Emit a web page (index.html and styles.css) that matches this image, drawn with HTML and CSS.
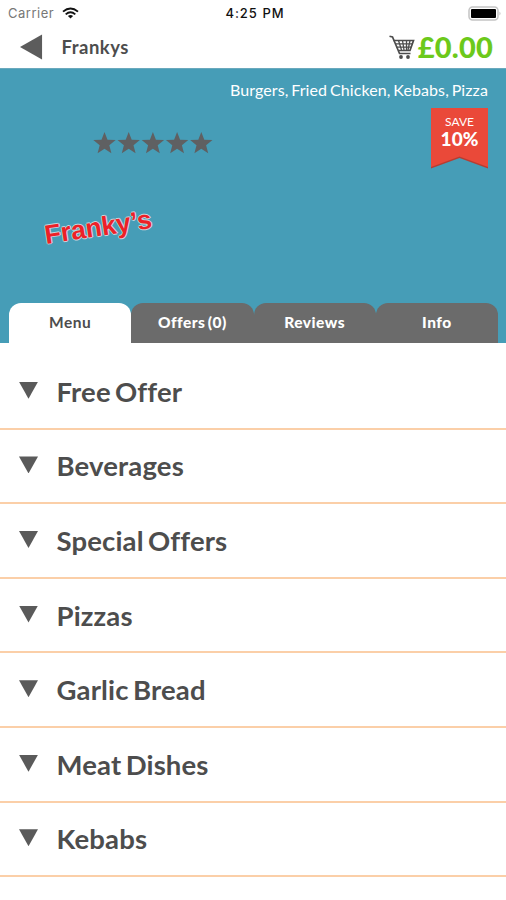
FILE: index.html
```html
<!DOCTYPE html>
<html lang="en">
<head>
<meta charset="utf-8">
<title>Frankys</title>
<link rel="stylesheet" href="styles.css">
</head>
<body>
<div class="status">
  <div class="carrier"><span>Carrier</span>
    <svg class="wifi" viewBox="0 0 17 12"><g fill="none" stroke="#111" stroke-width="1.9"><path d="M1 4.6Q8.500-1.800 16 4.600"/><path d="M3.700 7.400Q8.500 3.200 13.300 7.400"/></g><path d="M8.500 11.500L5.900 9Q8.500 6.900 11.100 9Z" fill="#111"/></svg>
  </div>
  <div class="clock">4:25 PM</div>
  <svg class="battery" viewBox="0 0 34 15"><rect x="1" y="1" width="29" height="13" rx="3.500" fill="#fff" stroke="#c4c4c4" stroke-width="1.500"/><rect x="3" y="3" width="25" height="9" rx="1" fill="#000"/><path d="M31.500 5.500q2 2 0 4z" fill="#bbb"/></svg>
</div>
<header class="bar">
  <svg class="back" viewBox="0 0 24 26"><path d="M0 13L23 0V26Z" fill="#5c5c5c"/></svg>
  <h1 class="title">Frankys</h1>
  <div class="basket">
    <svg class="cart" viewBox="0 0 26 24"><g fill="none" stroke="#4c4c4c" stroke-width="1.700"><path d="M0.500 1.200L3.500 2L10.500 18.500H21.500"/><path d="M4.500 5.500H24.500L21 15.500H9.500"/><path d="M6 8.800H23.500M7.500 12.100H22M9.500 5.500L12.500 15M13.500 5.500L15 15M17.500 5.500V15M21 5.500L19 15" stroke-width="1.300"/></g><circle cx="12" cy="22" r="1.900" fill="#4c4c4c"/><circle cx="19" cy="22" r="1.900" fill="#4c4c4c"/></svg>
    <span class="total">£0.00</span>
  </div>
</header>
<section class="hero">
  <p class="cuisines">Burgers, Fried Chicken, Kebabs, Pizza</p>
  <div class="summary">
    <div class="brand">
      <svg class="stars" viewBox="0 0 120 22"><defs><path id="star" d="M11.500 0L14.500 7.700L22.700 8.100L16.300 13.200L18.400 21.200L11.500 16.700L4.600 21.200L6.700 13.200L0.300 8.100L8.500 7.700Z"/></defs><g fill="#5f6062"><use href="#star"/><use href="#star" x="24.200"/><use href="#star" x="48.400"/><use href="#star" x="72.600"/><use href="#star" x="96.800"/></g></svg>
      <div class="logo">Franky’s</div>
    </div>
    <div class="ribbon"><svg class="flag" viewBox="0 0 57 61"><path d="M0 1V60.500L28.500 50L57 60.500V1Z" fill="#b73d32"/><path d="M0 0V59L28.500 48.500L57 59V0Z" fill="#ea4939"/></svg><span class="save">SAVE</span><strong class="percent">10%</strong></div>
  </div>
  <nav class="tabs">
    <a class="tab active">Menu</a><a class="tab">Offers (0)</a><a class="tab">Reviews</a><a class="tab">Info</a>
  </nav>
</section>
<ul class="categories">
  <li><i class="arrow"></i><span>Free Offer</span></li>
  <li><i class="arrow"></i><span>Beverages</span></li>
  <li><i class="arrow"></i><span>Special Offers</span></li>
  <li><i class="arrow"></i><span>Pizzas</span></li>
  <li><i class="arrow"></i><span>Garlic Bread</span></li>
  <li><i class="arrow"></i><span>Meat Dishes</span></li>
  <li><i class="arrow"></i><span>Kebabs</span></li>
</ul>
</body>
</html>
```
FILE: styles.css
```css
* { box-sizing: border-box; }
body { margin: 0; width: 506px; height: 900px; overflow: hidden; background: #fff; color: #4d4d4d; font-family: Lato, sans-serif; font-variant-ligatures: none; }
.status { height: 26px; display: grid; grid-template-columns: 1fr auto 1fr; align-items: center; padding: 0 4px 0 8px; font: 13px/26px Inter, sans-serif; }
.carrier { display: flex; align-items: center; gap: 8px; color: #777; letter-spacing: 0.5px; }
.carrier span { width: 46px; }
.wifi { width: 17px; height: 12px; }
.clock { color: #111; font-weight: 500; letter-spacing: 1px; }
.battery { width: 34px; height: 15px; justify-self: end; }
.bar { height: 42px; display: flex; align-items: center; padding: 0 13px 0 20px; }
.back { width: 23px; height: 26px; }
.title { margin: 0 auto 0 18.5px; font-size: 18.5px; line-height: 24px; font-weight: 700; letter-spacing: 0.5px; }
.basket { display: flex; align-items: center; gap: 3px; }
.cart { width: 26px; height: 24px; }
.total { color: #6cc91b; font-size: 29px; line-height: 34px; font-weight: 900; letter-spacing: 0.2px; }
.hero { height: 275px; background: #469db7; display: flex; flex-direction: column; border-top: 1px solid #6aa9bd; }
.cuisines { margin: 10px 18px 0 0; text-align: right; color: #fff; font-size: 16px; line-height: 22px; word-spacing: -1.4px; letter-spacing: 0.1px; }
.summary { display: flex; justify-content: space-between; padding: 7px 18px 0 44px; }
.brand { padding-top: 24px; }
.stars { display: block; width: 120px; height: 22px; margin-left: 49px; }
.logo { width: 108px; margin-top: 57px; color: #ed2027; font: 700 26.5px/32px "Liberation Sans", sans-serif; white-space: nowrap; transform: rotate(-8.5deg); text-shadow: 1px 0 #cbd3dd, -1px 0 #cbd3dd, 0 1px #cbd3dd, 0 -1px #cbd3dd; }
.ribbon { position: relative; width: 57px; height: 61px; display: flex; flex-direction: column; align-items: center; padding-top: 7px; color: #fff; }
.flag { position: absolute; inset: 0; width: 57px; height: 61px; }
.save { position: relative; font-size: 12px; line-height: 14px; }
.percent { position: relative; font-size: 19px; line-height: 19px; font-weight: 900; }
.tabs { margin: auto 8px 0 9px; display: grid; grid-template-columns: repeat(4, 1fr); }
.tab { height: 40px; border-radius: 12px 12px 0 0; background: #6b6b6b; color: #fff; text-align: center; font-size: 15.5px; line-height: 38px; font-weight: 900; word-spacing: -2px; letter-spacing: 0.5px; }
.tab.active { background: #fff; color: #4d4d4d; font-weight: 700; }
.categories { list-style: none; margin: 0; padding: 12px 0 0; }
.categories li { height: 74.6px; border-bottom: 2px solid #fbcfa8; display: flex; align-items: center; gap: 18.5px; padding: 1px 0 0 19px; font-size: 27.5px; line-height: 36px; font-weight: 700; word-spacing: -2.5px; letter-spacing: 0.15px; }
.arrow { width: 19px; height: 17px; margin-top: -3px; background: #5a5a5a; clip-path: polygon(0 0, 100% 0, 50% 100%); }
```
